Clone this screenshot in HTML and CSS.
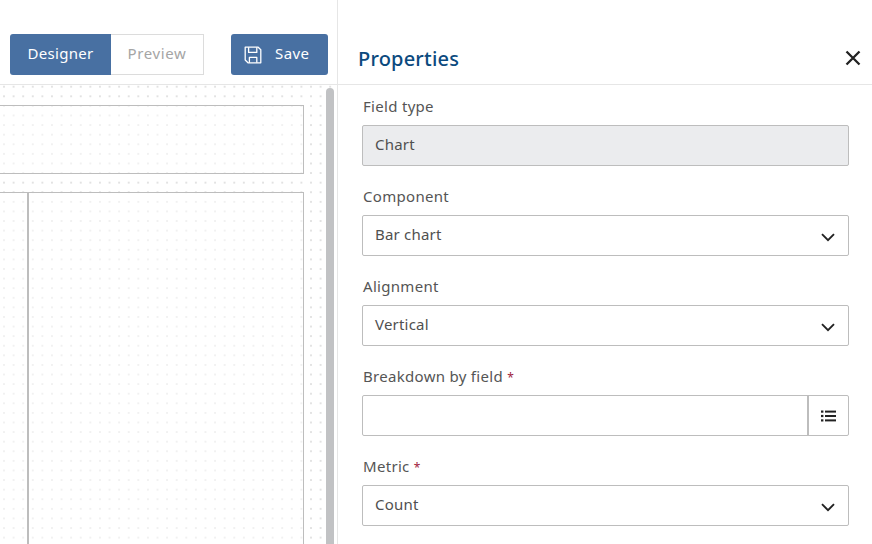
FILE: index.html
```html
<!DOCTYPE html>
<html lang="en">
<head>
<meta charset="utf-8">
<title>Properties</title>
<link rel="stylesheet" href="styles.css">
</head>
<body>
<div class="app">
  <section class="designer">
    <div class="toolbar">
      <div class="toggle">
        <button class="tab tab-active">Designer</button>
        <button class="tab tab-idle">Preview</button>
      </div>
      <button class="save">
        <svg class="save-icon" viewBox="0 0 18 18" fill="none" stroke="#fff" stroke-width="1.3" stroke-linejoin="round">
          <path d="M1.2 1.2h13l2.6 2.6v13H4l-2.8-2.8z"/>
          <path d="M4.6 1.2v5.2h8.2V1.2"/>
          <path d="M5.4 16.8v-5.4h7.4v5.4"/>
        </svg>
        <span>Save</span>
      </button>
    </div>
    <div class="canvas">
      <div class="box box-top"></div>
      <div class="box-row">
        <div class="box cell-left"></div>
        <div class="box cell-right"></div>
      </div>
      <div class="scrollbar"></div>
    </div>
  </section>
  <aside class="panel">
    <header class="panel-head">
      <h2>Properties</h2>
      <svg class="close" viewBox="0 0 16 16" fill="none" stroke="#222" stroke-width="2.3"><path d="M1.5 1.5l13 13M14.5 1.5l-13 13"/></svg>
    </header>
    <div class="form">
      <div class="field">
        <label>Field type</label>
        <div class="control control-disabled">Chart</div>
      </div>
      <div class="field">
        <label>Component</label>
        <div class="control">Bar chart
          <svg class="chev" viewBox="0 0 14 9" fill="none" stroke="#222" stroke-width="1.9"><path d="M1 1.2l6 6 6-6"/></svg>
        </div>
      </div>
      <div class="field">
        <label>Alignment</label>
        <div class="control">Vertical
          <svg class="chev" viewBox="0 0 14 9" fill="none" stroke="#222" stroke-width="1.9"><path d="M1 1.2l6 6 6-6"/></svg>
        </div>
      </div>
      <div class="field">
        <label>Breakdown by field <span class="req">*</span></label>
        <div class="control control-picker">
          <div class="picker-input"></div>
          <div class="picker-btn">
            <svg class="list" viewBox="0 0 15 12" fill="#222"><rect x="0" y="0.5" width="2.4" height="2.2"/><rect x="0" y="4.9" width="2.4" height="2.2"/><rect x="0" y="9.3" width="2.4" height="2.2"/><rect x="4" y="0.6" width="11" height="2"/><rect x="4" y="5" width="11" height="2"/><rect x="4" y="9.4" width="11" height="2"/></svg>
          </div>
        </div>
      </div>
      <div class="field">
        <label>Metric <span class="req">*</span></label>
        <div class="control">Count
          <svg class="chev" viewBox="0 0 14 9" fill="none" stroke="#222" stroke-width="1.9"><path d="M1 1.2l6 6 6-6"/></svg>
        </div>
      </div>
    </div>
  </aside>
</div>
</body>
</html>
```
FILE: styles.css
```css
* { box-sizing: border-box; }
html, body { margin: 0; height: 100%; }
body { font-family: "Noto Sans", "Open Sans", sans-serif; background: #fff; overflow: hidden; color: #4a4a4a; }
.app { display: flex; width: 872px; height: 544px; overflow: hidden; }
.designer { width: 338px; flex: none; border-right: 1px solid #e6e6e6; display: flex; flex-direction: column; }
.toolbar { height: 85px; flex: none; border-bottom: 1px solid #e6e6e6; padding: 34px 9px 0 10px; display: flex; justify-content: space-between; align-items: flex-start; }
.toggle { display: flex; height: 41px; }
button { font: inherit; margin: 0; cursor: pointer; }
.tab { height: 41px; font-size: 15px; padding: 0 0 4px; }
.tab-active { width: 101px; background: #4870a2; color: #fff; border: 0; border-radius: 3px 0 0 3px; letter-spacing: 0.3px; }
.tab-idle { width: 93px; background: #fff; color: #a5a5a5; border: 1px solid #dcdcdc; border-left: 0; letter-spacing: 0.6px; }
.save { width: 97px; height: 41px; background: #4870a2; color: #fff; border: 0; border-radius: 3px; font-size: 15px; letter-spacing: 0.4px; display: flex; align-items: center; padding: 0 0 0 13px; gap: 13px; }
.save span { margin-bottom: 4px; }
.save-icon { width: 18px; height: 18px; flex: none; }
.canvas { position: relative; flex: 1; overflow: hidden; padding-top: 20px; background-color: #fff; background-image: radial-gradient(circle, #e2e2e2 0.9px, transparent 1.1px); background-size: 9.6px 9.6px; background-position: -0.8px -3.1px; }
.box { border: 1px solid #bdbdbd; background: rgba(255, 255, 255, 0.5); }
.box-top { width: 334px; height: 69px; margin-left: -30px; }
.box-row { display: flex; margin-top: 18px; margin-left: -30px; height: 400px; }
.cell-left { width: 58px; }
.cell-right { width: 277px; margin-left: -1px; border-left-width: 2px; }
.scrollbar { position: absolute; left: 326px; top: 3px; bottom: -5px; width: 8px; background: #c1c2c4; border-radius: 4px; }
.panel { flex: 1; min-width: 0; display: flex; flex-direction: column; }
.panel-head { height: 85px; flex: none; border-bottom: 1px solid #e6e6e6; padding: 45px 10px 0 20px; display: flex; justify-content: space-between; align-items: flex-start; }
.panel-head h2 { margin: 0; font-size: 20px; font-weight: 500; line-height: 28px; color: #0b4a7e; letter-spacing: 0.2px; }
.close { width: 16px; height: 16px; margin: 5px 1px 0 0; }
.form { padding: 11px 23px 0 24px; display: flex; flex-direction: column; gap: 20px; }
.field { display: flex; flex-direction: column; }
.field label { font-size: 15px; line-height: 20px; height: 20px; margin-bottom: 9px; padding-left: 1px; color: #555; letter-spacing: 0.3px; }
.req { color: #a01c3c; font-size: 12px; line-height: 1; margin-left: 0; }
.control { height: 41px; border: 1px solid #bdbdbd; border-radius: 2px; padding: 0 12px 4px; display: flex; align-items: center; justify-content: space-between; font-size: 15px; letter-spacing: 0.2px; color: #505050; background: #fff; }
.control-disabled { background: #ebecee; }
.control-picker { padding: 0; align-items: stretch; }
.picker-input { flex: 1; }
.picker-btn { width: 41px; border-left: 2px solid #bdbdbd; display: flex; align-items: center; justify-content: center; }
.chev { width: 14px; height: 9px; margin: 8px 1px 0 0; }
.list { width: 15px; height: 12px; }
```
